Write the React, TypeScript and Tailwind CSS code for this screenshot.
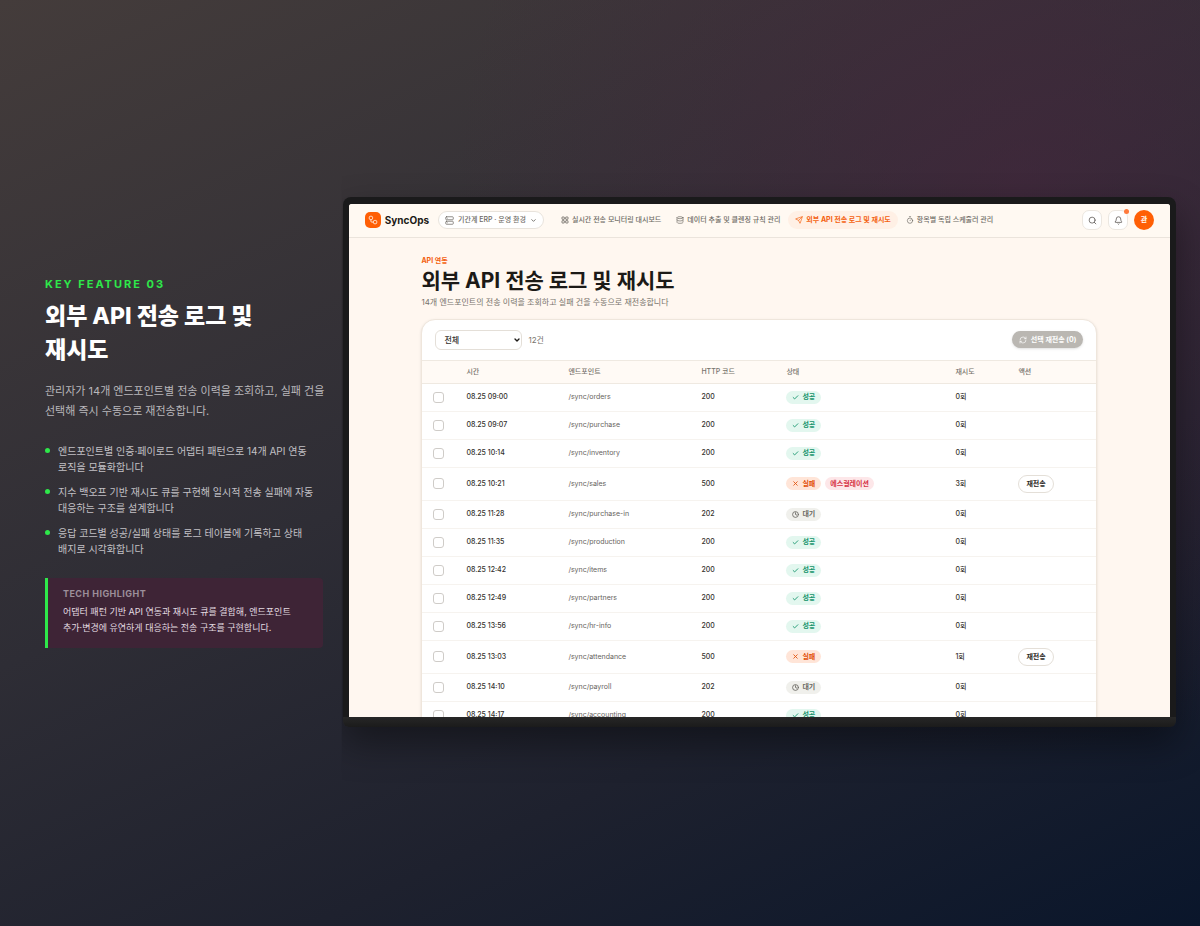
import React from "react";
import { Bell, Check, ChevronDown, Clock, Database, RefreshCw, Search, Send, Server, Timer, X } from "lucide-react";

type Status = "success" | "fail" | "wait";
type Log = { time: string; endpoint: string; code: number; status: Status; retry: number; escalated?: boolean };

const LOGS: Log[] = [
  { time: "08.25 09:00", endpoint: "/sync/orders", code: 200, status: "success", retry: 0 },
  { time: "08.25 09:07", endpoint: "/sync/purchase", code: 200, status: "success", retry: 0 },
  { time: "08.25 10:14", endpoint: "/sync/inventory", code: 200, status: "success", retry: 0 },
  { time: "08.25 10:21", endpoint: "/sync/sales", code: 500, status: "fail", retry: 3, escalated: true },
  { time: "08.25 11:28", endpoint: "/sync/purchase-in", code: 202, status: "wait", retry: 0 },
  { time: "08.25 11:35", endpoint: "/sync/production", code: 200, status: "success", retry: 0 },
  { time: "08.25 12:42", endpoint: "/sync/items", code: 200, status: "success", retry: 0 },
  { time: "08.25 12:49", endpoint: "/sync/partners", code: 200, status: "success", retry: 0 },
  { time: "08.25 13:56", endpoint: "/sync/hr-info", code: 200, status: "success", retry: 0 },
  { time: "08.25 13:03", endpoint: "/sync/attendance", code: 500, status: "fail", retry: 1 },
  { time: "08.25 14:10", endpoint: "/sync/payroll", code: 202, status: "wait", retry: 0 },
  { time: "08.25 14:17", endpoint: "/sync/accounting", code: 200, status: "success", retry: 0 },
];

const POINTS = [
  "엔드포인트별 인증·페이로드 어댑터 패턴으로 14개 API 연동 로직을 모듈화합니다",
  "지수 백오프 기반 재시도 큐를 구현해 일시적 전송 실패에 자동 대응하는 구조를 설계합니다",
  "응답 코드별 성공/실패 상태를 로그 테이블에 기록하고 상태 배지로 시각화합니다",
];

const BADGES = {
  success: { label: "성공", tone: "bg-[#e3f7ef] text-[#12936a]", Icon: Check },
  fail: { label: "실패", tone: "bg-[#ffe5d8] text-[#e2520c]", Icon: X },
  wait: { label: "대기", tone: "bg-[#f0f0ec] text-[#6b6963]", Icon: Clock },
};

function StatusBadge({ status }: { status: Status }) {
  const { label, tone, Icon } = BADGES[status];
  return (
    <span className={`inline-flex h-[13px] items-center gap-[3px] rounded-full px-[6px] text-[7px] font-bold ${tone}`}>
      <Icon className="size-[7px]" strokeWidth={3} />
      {label}
    </span>
  );
}

function LogoMark() {
  return (
    <svg viewBox="0 0 24 24" className="size-[10px]" fill="none" stroke="currentColor" strokeWidth="2" aria-hidden="true">
      <rect x="3" y="3" width="8" height="8" rx="3" />
      <path d="M7 11v4a2 2 0 0 0 2 2h4" />
      <rect x="13" y="13" width="8" height="8" rx="3" />
    </svg>
  );
}

function DashboardIcon({ className }: { className?: string }) {
  return (
    <svg viewBox="0 0 24 24" className={className} fill="none" stroke="currentColor" strokeWidth="2.5" aria-hidden="true">
      <rect x="3" y="3" width="7" height="7" rx="1" />
      <rect x="14" y="3" width="7" height="7" rx="1" />
      <rect x="3" y="14" width="7" height="7" rx="1" />
      <rect x="14" y="14" width="7" height="7" rx="1" />
    </svg>
  );
}

const NAV = [
  { label: "실시간 전송 모니터링 대시보드", Icon: DashboardIcon, active: false },
  { label: "데이터 추출 및 클렌징 규칙 관리", Icon: Database, active: false },
  { label: "외부 API 전송 로그 및 재시도", Icon: Send, active: true },
  { label: "항목별 독립 스케줄러 관리", Icon: Timer, active: false },
];

function TopBar() {
  return (
    <header className="flex h-[34px] items-center border-b border-[#ebe4dc] bg-[#fff9f2] px-4">
      <a href="#" className="flex items-center gap-1 text-[10px] font-bold text-[#1c1a17]">
        <span className="flex size-4 items-center justify-center rounded-[5px] bg-[#ff5f05] text-white">
          <LogoMark />
        </span>
        SyncOps
      </a>
      <button className="ml-[9px] flex h-[18px] items-center gap-1 rounded-full border border-[#e8e3dc] bg-white px-[6px] text-[7px] font-medium whitespace-nowrap text-[#6d6a64]">
        <Server className="size-[9px]" strokeWidth={2} />
        기간계 ERP · 운영 환경
        <ChevronDown className="size-[7px]" strokeWidth={3} />
      </button>
      <nav className="ml-[10px] flex items-center gap-px">
        {NAV.map(({ label, Icon, active }) => (
          <a
            key={label}
            href="#"
            className={`flex h-[18px] items-center gap-[3px] rounded-full px-[7px] text-[7px] whitespace-nowrap ${
              active ? "bg-[#fff0e5] font-bold text-[#f4610f]" : "font-medium text-[#6d6a64]"
            }`}
          >
            <Icon className="size-2" />
            {label}
          </a>
        ))}
      </nav>
      <div className="ml-auto flex items-center gap-[6px]">
        <button aria-label="검색" className="flex size-5 items-center justify-center rounded-[7px] border border-[#ece7e0] bg-white text-[#55524d]">
          <Search className="size-[9px]" />
        </button>
        <button aria-label="알림" className="relative flex size-5 items-center justify-center rounded-[7px] border border-[#ece7e0] bg-white text-[#55524d]">
          <Bell className="size-[9px]" />
          <span className="absolute -top-0.5 -right-0.5 size-[5px] rounded-full bg-[#ff7a3c]" />
        </button>
        <button className="size-5 rounded-full bg-[#ff5f05] text-[7px] font-bold text-white">관</button>
      </div>
    </header>
  );
}

function LogTable() {
  return (
    <table className="w-full table-fixed border-collapse text-left text-[7px] text-[#34322e]">
      <colgroup>
        <col className="w-[32px]" />
        <col className="w-[102px]" />
        <col className="w-[133px]" />
        <col className="w-[85px]" />
        <col className="w-[169px]" />
        <col className="w-[63px]" />
        <col />
      </colgroup>
      <thead>
        <tr className="h-[23px] border-y border-[#efe9e1] bg-[#fffaf5] text-[#77736c]">
          <th aria-label="선택" />
          {["시간", "엔드포인트", "HTTP 코드", "상태", "재시도", "액션"].map((h) => (
            <th key={h} className="px-3 font-medium">
              {h}
            </th>
          ))}
        </tr>
      </thead>
      <tbody>
        {LOGS.map((log) => (
          <tr key={log.time} className={`border-b border-[#f6f3ef] ${log.status === "fail" ? "h-[33px]" : "h-[28px]"}`}>
            <td className="pl-[11px]">
              <input
                type="checkbox"
                aria-label={`${log.endpoint} 선택`}
                className="block size-[11px] appearance-none rounded-[3px] border border-[#cfccc8] bg-white"
              />
            </td>
            <td className="px-3 font-medium">{log.time}</td>
            <td className="px-3 text-[#66635d]">{log.endpoint}</td>
            <td className="px-3 font-medium">{log.code}</td>
            <td className="px-3">
              <div className="flex items-center gap-1">
                <StatusBadge status={log.status} />
                {log.escalated && (
                  <span className="flex h-[13px] items-center rounded-full bg-[#fde7e9] px-[5px] font-bold text-[#d63345]">
                    에스컬레이션
                  </span>
                )}
              </div>
            </td>
            <td className="px-3 font-medium">{log.retry}회</td>
            <td className="px-3">
              {log.status === "fail" && (
                <button className="flex h-[18px] items-center rounded-full border border-[#e4dfd8] bg-white px-[7px] font-bold text-[#2a2825]">
                  재전송
                </button>
              )}
            </td>
          </tr>
        ))}
      </tbody>
    </table>
  );
}

function Screen() {
  return (
    <div className="aspect-[16/10] overflow-hidden rounded-t-[3px] bg-[#fff7f0]">
      <TopBar />
      <main className="mx-auto mt-[18px] max-w-[676px]">
        <p className="text-[7px] leading-[10px] font-bold text-[#f4610f]">API 연동</p>
        <h2 className="mt-[2px] text-[21px] leading-[26px] font-bold text-[#1c1a17]">외부 API 전송 로그 및 재시도</h2>
        <p className="mt-[2px] text-[8px] leading-[12px] text-[#77736c]">14개 엔드포인트의 전송 이력을 조회하고 실패 건을 수동으로 재전송합니다</p>
        <section className="mt-[11px] overflow-hidden rounded-t-[14px] border border-[#efe6dc] bg-white shadow-sm">
          <div className="flex h-10 items-center px-[13px]">
            <div className="relative">
              <select
                aria-label="상태 필터"
                className="block h-5 w-[87px] appearance-none rounded-md border border-[#e4dfd8] bg-white px-2 text-[8px] font-medium text-[#34322e]"
              >
                <option>전체</option>
                <option>성공</option>
                <option>실패</option>
                <option>대기</option>
              </select>
              <ChevronDown className="pointer-events-none absolute top-[6px] right-[1px] size-2 text-[#1c1a17]" strokeWidth={4} />
            </div>
            <span className="ml-[6px] text-[8px] text-[#77736c]">12건</span>
            <button
              disabled
              className="ml-auto flex h-[17px] items-center gap-1 rounded-full bg-[#bab7b2] px-[7px] text-[7px] font-bold text-white shadow"
            >
              <RefreshCw className="size-2" />
              선택 재전송 (0)
            </button>
          </div>
          <LogTable />
        </section>
      </main>
    </div>
  );
}

export default function App() {
  return (
    <div
      lang="ko"
      className="grid min-h-screen grid-cols-[minmax(0,1fr)_minmax(0,3fr)] items-center gap-5 bg-[radial-gradient(circle_at_85%_20%,rgba(74,36,62,0.55),transparent_45%),linear-gradient(155deg,#443c3b_0%,#2e2d35_45%,#1e212e_72%,#0a162b_100%)] pr-6 pb-0.5 pl-[45px] font-['Inter','Noto_Sans_CJK_KR',sans-serif] break-keep"
    >
      <section>
        <p className="text-[11px] leading-[14px] font-bold tracking-[2px] text-[#2ee84a]">KEY FEATURE 03</p>
        <h1 className="mt-2 text-[23px] leading-[34px] font-extrabold text-white">
          외부 API 전송 로그 및<br />
          재시도
        </h1>
        <p className="-mr-2 mt-[14px] text-[11px] leading-5 text-[#b9b7bb]">
          관리자가 14개 엔드포인트별 전송 이력을 조회하고, 실패 건을 선택해 즉시 수동으로 재전송합니다.
        </p>
        <ul className="mt-[22px] flex flex-col gap-[9px] text-[10px] leading-4 text-[#c2c0c5]">
          {POINTS.map((p) => (
            <li key={p} className="flex gap-2">
              <span className="mt-[5px] size-[5px] shrink-0 rounded-full bg-[#2ee84a]" />
              {p}
            </li>
          ))}
        </ul>
        <aside className="mt-[21px] rounded-r-[4px] border-l-[3px] border-[#2ee84a] bg-[#3e2436] px-[15px] pt-[10px] pb-3">
          <p className="text-[9px] leading-[12px] font-bold tracking-wider text-[#9c8e9a]">TECH HIGHLIGHT</p>
          <p className="mt-1 text-[9px] leading-4 text-[#e2dae0]">
            어댑터 패턴 기반 API 연동과 재시도 큐를 결합해, 엔드포인트 추가·변경에 유연하게 대응하는 전송 구조를 구현합니다.
          </p>
        </aside>
      </section>
      <div className="rounded-t-[8px] rounded-b-[6px] shadow-[0_16px_36px_rgba(0,0,0,0.4)] [clip-path:inset(-60px_-24px_-80px_-1px)]">
        <div className="rounded-t-[8px] bg-[#1a1a1b] px-[6px] pt-[7px]">
          <Screen />
        </div>
        <div className="h-[10px] rounded-b-[6px] bg-linear-to-b from-[#272727] to-[#1b1b1b]" />
      </div>
    </div>
  );
}
